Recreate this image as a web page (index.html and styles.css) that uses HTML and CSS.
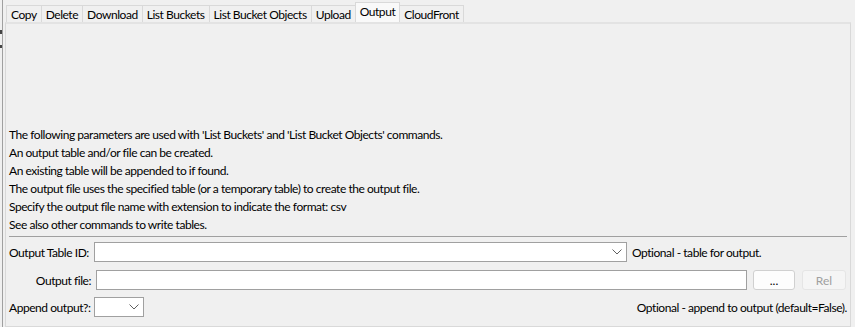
FILE: index.html
```html
<!DOCTYPE html>
<html lang="en">
<head>
    <meta charset="UTF-8">
    <meta name="viewport" content="width=device-width, initial-scale=1.0">
    <title>Output</title>
    <link rel="stylesheet" href="styles.css">
</head>
<body>
    <div class="window">
        <div class="split-edge">
            <span class="mark mark-1"></span>
            <span class="mark mark-2"></span>
        </div>

        <div class="tabs">
            <ul class="tab-bar">
                <li class="tab">Copy</li>
                <li class="tab">Delete</li>
                <li class="tab">Download</li>
                <li class="tab">List Buckets</li>
                <li class="tab">List Bucket Objects</li>
                <li class="tab">Upload</li>
                <li class="tab active">Output</li>
                <li class="tab">CloudFront</li>
            </ul>

            <div class="tab-panel">
                <div class="notes">
                    <p>The following parameters are used with 'List Buckets' and 'List Bucket Objects' commands.</p>
                    <p>An output table and/or file can be created.</p>
                    <p>An existing table will be appended to if found.</p>
                    <p>The output file uses the specified table (or a temporary table) to create the output file.</p>
                    <p>Specify the output file name with extension to indicate the format: csv</p>
                    <p>See also other commands to write tables.</p>
                </div>
                <hr class="sep">

                <div class="row row-table">
                    <label class="lbl">Output Table ID:</label>
                    <div class="combo combo-wide">
                        <span class="chev">
                            <svg width="10" height="6" viewBox="0 0 10 6"><path d="M0.5 0.5 L5 5 L9.5 0.5" fill="none" stroke="#606060" stroke-width="1"/></svg>
                        </span>
                    </div>
                    <span class="hint">Optional - table for output.</span>
                </div>

                <div class="row row-file">
                    <label class="lbl lbl-right">Output file:</label>
                    <div class="field"></div>
                    <button class="btn">...</button>
                    <button class="btn btn-off">Rel</button>
                </div>

                <div class="row row-append">
                    <label class="lbl">Append output?:</label>
                    <div class="combo combo-small">
                        <span class="chev">
                            <svg width="10" height="6" viewBox="0 0 10 6"><path d="M0.5 0.5 L5 5 L9.5 0.5" fill="none" stroke="#606060" stroke-width="1"/></svg>
                        </span>
                    </div>
                    <span class="hint hint-end">Optional - append to output (default=False).</span>
                </div>
            </div>
        </div>
    </div>
</body>
</html>
```

FILE: styles.css
```css
body {
    margin: 0;
    background-color: #f0f0f0;
    font-family: Lato, "Liberation Sans", sans-serif;
    font-size: 12px;
    letter-spacing: -0.45px;
    color: #000;
}

.window {
    display: flex;
    height: 327px;
    overflow: hidden;
}

.split-edge {
    width: 2px;
    border-right: 1px solid #a0a0a0;
    display: flex;
    flex-direction: column;
    flex: none;
}
.mark {
    width: 2px;
    background-color: #444;
}
.mark-1 {
    height: 4px;
    margin-top: 30px;
}
.mark-2 {
    height: 3px;
    margin-top: 11px;
}

.tabs {
    flex: 1;
    margin-left: 2px;
    margin-right: 4px;
    padding-top: 2px;
    display: flex;
    flex-direction: column;
}

.tab-bar {
    list-style: none;
    margin: 0;
    padding: 0 0 0 1px;
    display: flex;
    align-items: flex-end;
    height: 20px;
}
.tab {
    height: 17px;
    line-height: 17px;
    padding: 0 4px;
    border: 1px solid #d9d9d9;
    border-bottom: none;
    border-left: none;
    background-color: #f0f0f0;
    box-sizing: border-box;
    white-space: nowrap;
}
.tab:first-child {
    border-left: 1px solid #d9d9d9;
}
.tab.active {
    height: 20px;
    line-height: 18px;
    background-color: #f9f9f9;
    border-left: 1px solid #d9d9d9;
    margin-left: -1px;
}

.tab-panel {
    flex: 1;
    border: 1px solid #d9d9d9;
    border-top: 2px solid #e3e3e3;
    background-color: #f0f0f0;
    padding: 0 3px;
    display: flex;
    flex-direction: column;
}

.notes {
    margin-top: 102px;
}
.notes p {
    margin: 0;
    height: 18px;
    line-height: 18px;
    white-space: nowrap;
}

.sep {
    border: none;
    border-top: 1px solid #a0a0a0;
    margin: 2px 0 0 0;
}

.row {
    display: flex;
    align-items: center;
    height: 20px;
    white-space: nowrap;
}
.row-table { margin-top: 5px; }
.row-file { margin-top: 8px; }
.row-append { margin-top: 7px; }

.lbl {
    width: 85px;
    flex: none;
}
.lbl-right {
    text-align: right;
    width: 82px;
    margin-right: 5px;
}

.combo, .field {
    height: 20px;
    box-sizing: border-box;
    border: 1px solid #a0a0a0;
    background-color: #fff;
    position: relative;
    flex: none;
}
.combo-wide {
    width: 533px;
}
.combo-small {
    width: 50px;
}
.chev {
    position: absolute;
    right: 4px;
    top: 6px;
    line-height: 0;
}
.field {
    width: 651px;
}

.hint {
    margin-left: 5px;
}
.hint-end {
    margin-left: auto;
}

.btn {
    font-family: inherit;
    font-size: 12px;
    letter-spacing: 0;
    height: 20px;
    width: 42px;
    margin-left: 6px;
    padding: 0;
    background-color: #fdfdfd;
    border: 1px solid #d0d0d0;
    border-radius: 3px;
    color: #000;
}
.btn-off {
    margin-left: 7px;
    width: 44px;
    color: #a0a0a0;
    background-color: #f5f5f5;
    border-color: #e5e5e5;
}
```
